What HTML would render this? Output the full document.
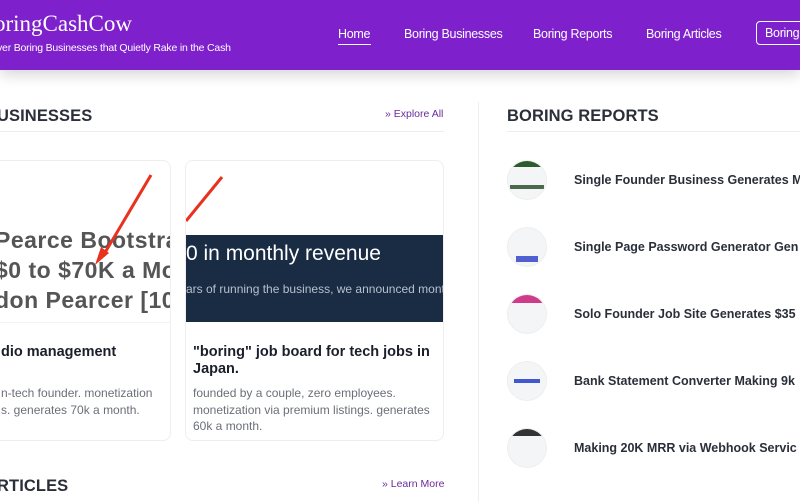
<!DOCTYPE html>
<html><head><style>
*{margin:0;padding:0;box-sizing:border-box}
body{width:800px;height:500px;overflow:hidden;background:#fff;font-family:"Liberation Sans",sans-serif;position:relative}
.hdr{position:absolute;left:0;top:0;width:800px;height:70px;background:#7e20cc;box-shadow:0 4px 14px rgba(0,0,0,.18)}
.abs{position:absolute;white-space:nowrap}
.nav{color:#fff;font-size:12.5px;top:27px;letter-spacing:-.3px}
.h2{font-size:16.5px;font-weight:bold;color:#2a2f3a;letter-spacing:.1px}
.card{position:absolute;border:1px solid #eee;border-radius:8px;background:#fff;overflow:hidden}
.ct{font-size:14.5px;font-weight:bold;color:#1b1f2a;line-height:17px}
.cd{font-size:12px;color:#6b6f78;line-height:16.5px}
.circ{position:absolute;left:507px;width:40px;height:40px;border-radius:50%;background:#f4f5f6;overflow:hidden;border:1px solid #eee}
.rt{position:absolute;left:574px;font-size:12.5px;font-weight:bold;color:#2a2f3a;white-space:nowrap}
</style></head><body>
<div class="hdr">
<div class="abs" style="left:-6px;top:11px;font-family:'Liberation Serif',serif;font-size:23px;color:#fff">oringCashCow</div>
<div class="abs" style="left:-3px;top:42px;font-size:10.5px;color:#fff;letter-spacing:-.2px">ver Boring Businesses that Quietly Rake in the Cash</div>
<div class="abs nav" style="left:338px">Home</div>
<div class="abs" style="left:338px;top:44px;width:33px;height:1px;background:#fff"></div>
<div class="abs nav" style="left:404px">Boring Businesses</div>
<div class="abs nav" style="left:533px">Boring Reports</div>
<div class="abs nav" style="left:646px">Boring Articles</div>
<div class="abs nav" style="left:756px;top:21px;border:1px solid #fff;border-radius:4px;padding:4px 8px;width:60px">Boring</div>
</div>
<div class="abs h2" style="left:-3px;top:107px">USINESSES</div>
<div class="abs" style="left:385px;top:108px;font-size:10.5px;color:#6a2a9c">» Explore All</div>
<div class="abs" style="left:0;top:131px;width:444px;height:1px;background:#eee"></div>
<div class="abs" style="left:478px;top:102px;width:1px;height:400px;background:#eee"></div>
<div class="abs h2" style="left:507px;top:107px">BORING REPORTS</div>
<div class="abs" style="left:507px;top:131px;width:293px;height:1px;background:#eee"></div>

<div class="card" style="left:-10px;top:160px;width:181px;height:281px">
<div class="abs" style="left:4px;top:64px;font-size:23px;font-weight:bold;color:#555;line-height:30px;letter-spacing:.5px">Pearce Bootstra<br>$0 to $70K a Mo<br>don Pearcer [10</div>
<div class="abs" style="left:0;top:161px;width:181px;height:1px;background:#f4f4f4"></div>
<div class="abs ct" style="left:10px;top:183px">dio management</div>
<div class="abs cd" style="left:10px;top:224px">n-tech founder. monetization<br>s. generates 70k a month.</div>
<svg class="abs" style="left:0;top:0" width="181" height="120"><path d="M160 14 L112 95" stroke="#e8321e" stroke-width="3"/><path d="M104 104 L110 86 L118 92Z" fill="#e8321e"/></svg>
</div>
<div class="card" style="left:185px;top:160px;width:259px;height:281px">
<svg class="abs" style="left:0;top:0" width="60" height="70"><path d="M36 16 L0 60" stroke="#e8321e" stroke-width="3"/></svg>
<div class="abs" style="left:0;top:74px;width:259px;height:87px;background:#1a2b44"></div>
<div class="abs" style="left:0;top:81px;font-size:21px;color:#fff">0 in monthly revenue</div>
<div class="abs" style="left:0;top:121px;font-size:12px;color:#b8c0cc">ars of running the business, we announced month</div>
<div class="abs ct" style="left:7px;top:183px;white-space:normal;width:250px">"boring" job board for tech jobs in Japan.</div>
<div class="abs cd" style="left:7px;top:224px;white-space:normal;width:250px">founded by a couple, zero employees. monetization via premium listings. generates 60k a month.</div>
</div>

<div class="circ" style="top:160px"><div style="height:6px;background:#2d5b2d"></div><div style="margin:18px 2px 0;height:4px;background:#4a6a4a"></div></div>
<div class="rt" style="top:173px">Single Founder Business Generates M</div>
<div class="circ" style="top:227px"><div style="margin:28px 8px 0;height:6px;background:#5060d0"></div></div>
<div class="rt" style="top:240px">Single Page Password Generator Gen</div>
<div class="circ" style="top:294px"><div style="height:8px;background:#d03a8a"></div></div>
<div class="rt" style="top:307px">Solo Founder Job Site Generates $35</div>
<div class="circ" style="top:361px"><div style="margin:17px 6px 0;height:4px;background:#4058d0"></div></div>
<div class="rt" style="top:374px">Bank Statement Converter Making 9k</div>
<div class="circ" style="top:428px"><div style="height:7px;background:#333"></div></div>
<div class="rt" style="top:441px">Making 20K MRR via Webhook Servic</div>

<div class="abs h2" style="left:-3px;top:477px">RTICLES</div>
<div class="abs" style="left:382px;top:478px;font-size:10.5px;color:#6a2a9c">» Learn More</div>
</body></html>
